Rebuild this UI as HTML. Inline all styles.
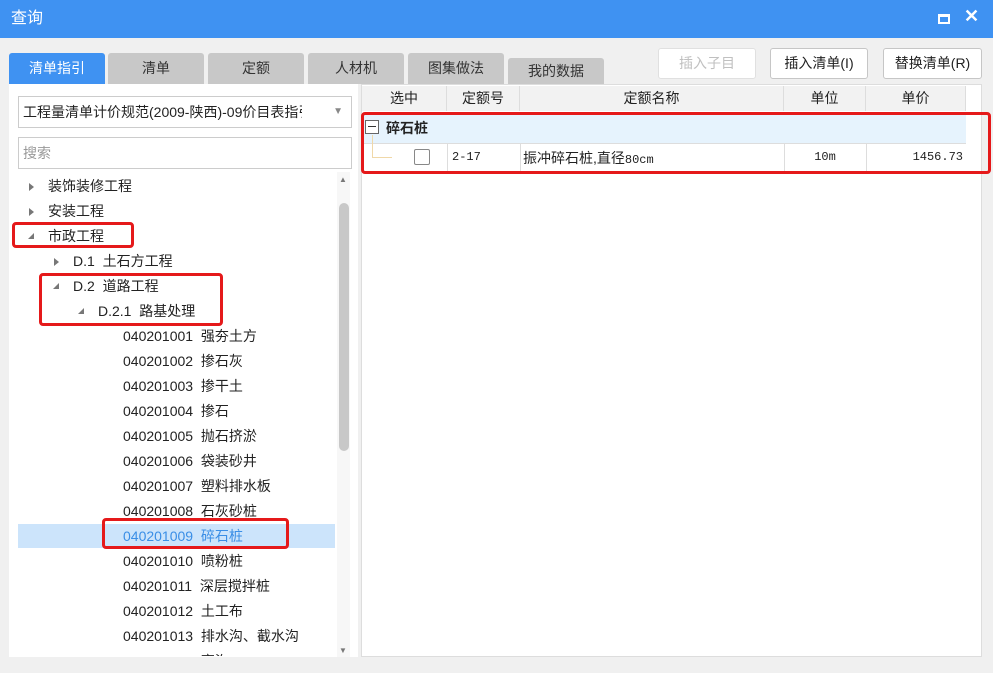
<!DOCTYPE html>
<html><head><meta charset="utf-8"><style>
*{margin:0;padding:0;box-sizing:border-box}
body{width:993px;height:673px;background:#f0f0f0;font-family:"Liberation Sans","Noto Sans CJK SC",sans-serif;font-size:14px;color:#222;position:relative;overflow:hidden}
.abs{position:absolute}
.title{left:0;top:0;width:993px;height:38px;background:#3f92f2;color:#fff;font-size:16px;line-height:38px;padding-left:11px}
.tab{top:53px;height:31px;background:#c8c8c8;border-radius:3px 3px 0 0;text-align:center;line-height:31px;font-size:14px;color:#333}
.btn{top:48px;height:31px;border:1px solid #c6c6c6;background:#fff;border-radius:3px;text-align:center;line-height:29px;font-size:14px}
.panel{background:#fff}
.row{left:0;height:25px;line-height:25px;white-space:nowrap;font-size:14px}
.tri{display:inline-block;width:0;height:0;margin-right:14px;vertical-align:middle}
.tr{border-left:5px solid #777;border-top:4px solid transparent;border-bottom:4px solid transparent}
.td{border-left:6px solid transparent;border-bottom:6px solid #777;margin-top:-2px}
.red{border:3px solid #e5191a;border-radius:4px}
.hd{top:86px;height:25px;line-height:25px;text-align:center;border-right:1px solid #ddd;background:#f2f2f2;font-size:14px}
.mono{font-family:"Liberation Mono","Noto Sans CJK SC",monospace;font-size:12px}
</style></head><body>
<div class="abs title">查询</div>
<div class="abs" style="left:938px;top:14px;width:12px;height:10px;border:2px solid #fff;border-top-width:3px"></div>
<div class="abs" style="left:964px;top:6px;color:#fff;font-size:18px;font-weight:bold">✕</div>

<div class="abs tab" style="left:9px;width:96px;background:#3f92f2;color:#fff">清单指引</div>
<div class="abs tab" style="left:108px;width:96px">清单</div>
<div class="abs tab" style="left:208px;width:96px">定额</div>
<div class="abs tab" style="left:308px;width:96px">人材机</div>
<div class="abs tab" style="left:408px;width:96px">图集做法</div>
<div class="abs tab" style="left:508px;width:96px;top:58px;height:26px;line-height:26px">我的数据</div>
<div class="abs btn" style="left:658px;width:98px;color:#c0c0c0;border-color:#e0e0e0">插入子目</div>
<div class="abs btn" style="left:770px;width:98px">插入清单(I)</div>
<div class="abs btn" style="left:883px;width:99px">替换清单(R)</div>

<div class="abs panel" style="left:9px;top:84px;width:349px;height:573px"></div>
<div class="abs" style="left:18px;top:96px;width:334px;height:32px;border:1px solid #ccc;background:#fff;line-height:30px;padding-left:4px;font-size:14px;overflow:hidden;white-space:nowrap">工程量清单计价规范(2009-陕西)-09价目表指<span style="display:inline-block;width:4px;overflow:hidden;vertical-align:top">引</span><span class="abs" style="right:8px;top:0;color:#888;font-size:10px">▼</span></div>
<div class="abs" style="left:18px;top:137px;width:334px;height:32px;border:1px solid #ccc;background:#fff;line-height:30px;padding-left:4px;color:#999">搜索</div>

<div class="abs" style="left:18px;top:524px;width:317px;height:24px;background:#cce4fb"></div>
<div class="abs" style="left:337px;top:172px;width:13px;height:485px;background:#f7f7f7"></div>
<div class="abs" style="left:339px;top:203px;width:10px;height:248px;background:#c8c8c8;border-radius:5px"></div>
<div class="abs" style="left:339px;top:175px;color:#777;font-size:8px">▲</div>
<div class="abs" style="left:339px;top:646px;color:#777;font-size:8px">▼</div>

<div class="abs" style="left:0;top:174px;width:336px;height:482px;overflow:hidden">
<div class="abs row" style="top:0;left:29px"><span class="tri tr"></span>装饰装修工程</div>
<div class="abs row" style="top:25px;left:29px"><span class="tri tr"></span>安装工程</div>
<div class="abs row" style="top:50px;left:28px"><span class="tri td"></span>市政工程</div>
<div class="abs row" style="top:75px;left:54px"><span class="tri tr"></span>D.1&nbsp; 土石方工程</div>
<div class="abs row" style="top:100px;left:53px"><span class="tri td"></span>D.2&nbsp; 道路工程</div>
<div class="abs row" style="top:125px;left:78px"><span class="tri td"></span>D.2.1&nbsp; 路基处理</div>
<div class="abs row" style="top:150px;left:123px">040201001&nbsp; 强夯土方</div>
<div class="abs row" style="top:175px;left:123px">040201002&nbsp; 掺石灰</div>
<div class="abs row" style="top:200px;left:123px">040201003&nbsp; 掺干土</div>
<div class="abs row" style="top:225px;left:123px">040201004&nbsp; 掺石</div>
<div class="abs row" style="top:250px;left:123px">040201005&nbsp; 抛石挤淤</div>
<div class="abs row" style="top:275px;left:123px">040201006&nbsp; 袋装砂井</div>
<div class="abs row" style="top:300px;left:123px">040201007&nbsp; 塑料排水板</div>
<div class="abs row" style="top:325px;left:123px">040201008&nbsp; 石灰砂桩</div>
<div class="abs row" style="top:350px;left:123px;color:#3a8ee6">040201009&nbsp; 碎石桩</div>
<div class="abs row" style="top:375px;left:123px">040201010&nbsp; 喷粉桩</div>
<div class="abs row" style="top:400px;left:123px">040201011&nbsp; 深层搅拌桩</div>
<div class="abs row" style="top:425px;left:123px">040201012&nbsp; 土工布</div>
<div class="abs row" style="top:450px;left:123px">040201013&nbsp; 排水沟、截水沟</div>
<div class="abs row" style="top:475px;left:123px">040201014&nbsp; 盲沟</div>
</div>
<div class="abs red" style="left:12px;top:222px;width:122px;height:26px"></div>
<div class="abs red" style="left:39px;top:273px;width:184px;height:53px"></div>
<div class="abs red" style="left:102px;top:518px;width:187px;height:31px"></div>

<div class="abs panel" style="left:361px;top:84px;width:621px;height:573px;border:1px solid #ddd"></div>
<div class="abs hd" style="left:362px;width:85px">选中</div>
<div class="abs hd" style="left:447px;width:73px">定额号</div>
<div class="abs hd" style="left:520px;width:264px">定额名称</div>
<div class="abs hd" style="left:784px;width:82px">单位</div>
<div class="abs hd" style="left:866px;width:100px">单价</div>
<div class="abs" style="left:362px;top:113px;width:604px;height:31px;background:#e6f3fd;border-bottom:1px solid #ddd"></div>
<div class="abs" style="left:365px;top:120px;width:14px;height:14px;border:1px solid #666;background:#fff"><div class="abs" style="left:2px;top:5px;width:8px;height:1px;background:#333"></div></div>
<div class="abs" style="left:386px;top:118px;font-weight:bold;font-size:14px">碎石桩</div>
<div class="abs" style="left:372px;top:135px;width:1px;height:22px;background:#f0d8a8"></div>
<div class="abs" style="left:372px;top:157px;width:20px;height:1px;background:#f0d8a8"></div>
<div class="abs" style="left:414px;top:149px;width:16px;height:16px;border:1px solid #888;border-radius:2px;background:#fff"></div>
<div class="abs" style="left:447px;top:144px;width:1px;height:29px;background:#ddd"></div>
<div class="abs" style="left:520px;top:144px;width:1px;height:29px;background:#ddd"></div>
<div class="abs" style="left:784px;top:144px;width:1px;height:29px;background:#ddd"></div>
<div class="abs" style="left:866px;top:144px;width:1px;height:29px;background:#ddd"></div>
<div class="abs mono" style="left:452px;top:150px">2-17</div>
<div class="abs" style="left:523px;top:148px;font-size:14px">振冲碎石桩,直径<span class="mono">80cm</span></div>
<div class="abs mono" style="left:784px;top:150px;width:82px;text-align:center">10m</div>
<div class="abs mono" style="left:866px;top:150px;width:97px;text-align:right">1456.73</div>
<div class="abs red" style="left:361px;top:112px;width:630px;height:62px"></div>
</body></html>
